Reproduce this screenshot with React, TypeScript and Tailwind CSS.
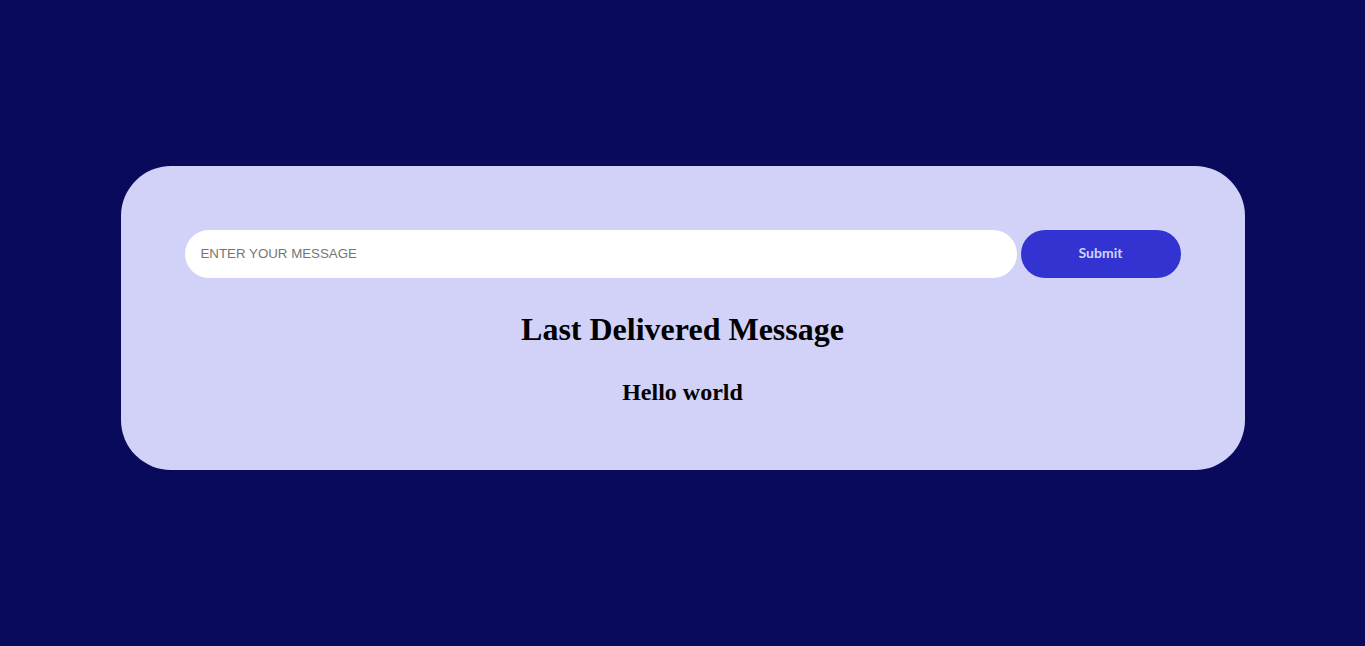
import React from "react";

export default function App() {
  return (
    <div className="min-h-[646px] w-full bg-[#0a0a5c] pt-[166px]">
      <div className="mx-auto w-[1124px] rounded-[50px] bg-[#d2d2f8] p-[64px]">
        <div className="flex gap-[4px]">
          <input
            type="text"
            placeholder="ENTER YOUR MESSAGE"
            className="h-[48px] flex-1 rounded-full bg-white px-[16px] pb-[2px] font-['Liberation_Sans',Arial,sans-serif] text-[13.3px] text-black outline-none placeholder:text-[#757575]"
          />
          <button className="h-[48px] w-[160px] rounded-full bg-[#3333d1] pb-[3px] font-['Lato','Liberation_Sans',sans-serif] text-[14px] leading-none font-bold text-[#d2d2f8]">
            Submit
          </button>
        </div>
        <h1 className="mt-[33px] text-center font-['Liberation_Serif','Times_New_Roman',serif] text-[32px] leading-[37px] font-bold text-black">
          Last Delivered Message
        </h1>
        <h2 className="mt-[30px] text-center font-['Liberation_Serif','Times_New_Roman',serif] text-[24px] leading-[28px] font-bold text-black">
          Hello world
        </h2>
      </div>
    </div>
  );
}
